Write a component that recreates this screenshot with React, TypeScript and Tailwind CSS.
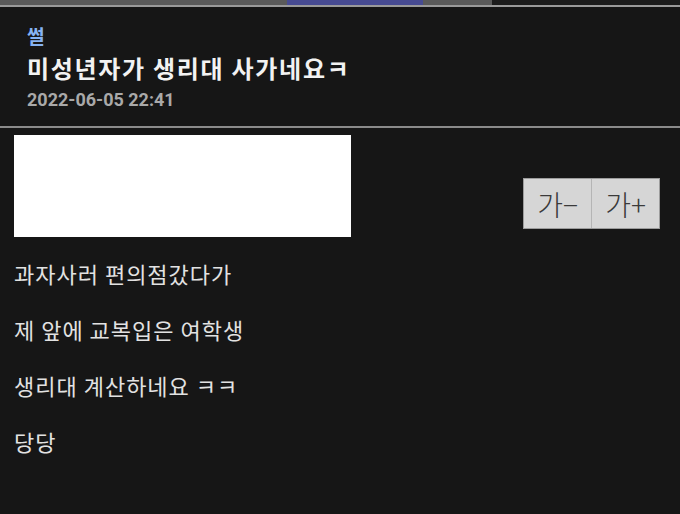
export default function App() {
  const lines = [
    "과자사러 편의점갔다가",
    "제 앞에 교복입은 여학생",
    "생리대 계산하네요 ㅋㅋ",
    "당당",
  ];

  return (
    <div
      className="w-[680px] h-[514px] overflow-hidden bg-[#161616]"
      style={{ fontFamily: '"Noto Sans CJK KR", Roboto, sans-serif' }}
    >
      {/* top strip */}
      <div className="flex h-[5px]">
        <div className="w-[287px] bg-[#5a5a5a]" />
        <div className="w-[136px] bg-[#474b92]" />
        <div className="w-[69px] bg-[#5a5a5a]" />
        <div className="flex-1 bg-[#1c1c1c]" />
      </div>
      <div className="h-[2px] bg-[#9a9a9a]" />

      {/* header */}
      <div className="pl-[27px] pt-[15px] h-[119px]">
        <div className="text-[19px] leading-[28px] font-bold text-[#86b2f2]">썰</div>
        <h1 className="text-[24px] leading-[35px] font-bold tracking-[1.7px] text-[#f2f2f2]">
          미성년자가 생리대 사가네요ㅋ
        </h1>
        <div
          className="mt-[3px] text-[18px] leading-[24px] font-bold text-[#a9a9a9]"
          style={{ fontFamily: "Roboto, sans-serif" }}
        >
          2022-06-05 22:41
        </div>
      </div>
      <div className="h-[2px] bg-[#8a8a8a]" />

      {/* content */}
      <div className="px-[14px] pt-[7px]">
        <div className="flex justify-between">
          <div className="w-[337px] h-[102px] bg-white" />
          <div className="mt-[43px] mr-[6px] flex h-[51px] border border-[#9c9c9c] bg-[#d6d6d6]">
            <button className="w-[68px] h-full flex items-center justify-center text-[28px] font-light text-[#3a3a3a] border-r border-[#b5b5b5]">
              가−
            </button>
            <button className="w-[67px] h-full flex items-center justify-center text-[28px] font-light text-[#3a3a3a]">
              가+
            </button>
          </div>
        </div>
        <div className="mt-[8px]">
          {lines.map((l) => (
            <p key={l} className="text-[22px] leading-[56px] tracking-[1px] text-[#e2e2e2]">
              {l}
            </p>
          ))}
        </div>
      </div>
    </div>
  );
}
